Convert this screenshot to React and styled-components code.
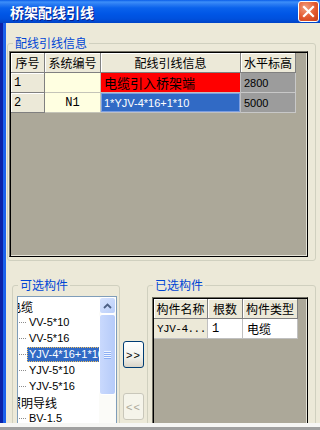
import React from 'react';
import styled, { createGlobalStyle, css } from 'styled-components';

const CJK = `"Noto Sans CJK SC", "Liberation Sans", sans-serif`;
const MONO = `"Liberation Mono", "Noto Sans CJK SC", monospace`;
const SANS = `"Liberation Sans", "Noto Sans CJK SC", sans-serif`;

const Global = createGlobalStyle`
  html, body { margin: 0; padding: 0; background: #ECE9D8; }
  body { font-family: ${CJK}; }
`;

const Window = styled.div`
  width: 320px;
  height: 430px;
  overflow: hidden;
  display: flex;
  flex-direction: column;
  background: #ECE9D8;
`;

const TitleBar = styled.div`
  height: 23px;
  flex: none;
  box-sizing: border-box;
  display: flex;
  align-items: center;
  justify-content: space-between;
  padding: 0 1px 0 10px;
  background: linear-gradient(to bottom, #0A5DE8 0px, #3D8FF9 2px, #2C7DF3 4px, #0A62EC 8px, #0056E6 14px, #0050DD 19px, #0043C6 23px);
`;

const Title = styled.span`
  color: #fff;
  font: bold 14px/16px ${CJK};
  text-shadow: 1px 1px 0 #0A1E8C;
`;

const CloseButton = styled.div`
  width: 21px;
  height: 21px;
  box-sizing: border-box;
  border: 1px solid #fff;
  border-radius: 3px;
  background: radial-gradient(circle at 35% 30%, #F3A080 0%, #E2582F 55%, #C63C18 100%);
  display: flex;
  align-items: center;
  justify-content: center;
`;

const Body = styled.div`
  height: 400px;
  flex: none;
  display: flex;
  overflow: hidden;
`;

const LeftFrame = styled.div`
  width: 6px;
  flex: none;
  background: linear-gradient(to right, #0A22A8 0px, #0A22A8 3px, #1C62EC 3px, #1C62EC 6px);
`;

const Content = styled.div`
  flex: 1;
  display: flex;
  flex-direction: column;
  padding-top: 13px;
  min-width: 0;
`;

const GroupBox = styled.fieldset`
  margin: 0 0 0 ${p => p.$ml || 0}px;
  width: ${p => p.$w}px;
  box-sizing: border-box;
  border: 1px solid #D0D0BF;
  border-radius: 3px;
  padding: ${p => p.$pad};
  min-width: 0;
  flex: none;
`;

const Legend = styled.legend`
  margin-left: ${p => p.$ml}px;
  padding: 0 2px;
  color: #0046D5;
  font: 12px/14px ${CJK};
`;

const GridFrame = styled.div`
  width: ${p => p.$w}px;
  height: ${p => p.$h}px;
  box-sizing: border-box;
  border: 1px solid;
  border-color: #716F64 #000 #000 #716F64;
  box-shadow: inset 1px 1px 0 #000, inset -1px -1px 0 #E4E2D6;
  background: #ACA899;
  padding: 1px 0 0 1px;
  overflow: hidden;
`;

const Row = styled.div`
  display: flex;
`;

const kinds = {
  head: css`
    background: #ECE9D8;
    border-right: 1px solid #808080;
    border-bottom: 1px solid #808080;
    box-shadow: inset 1px 1px 0 #fff;
    font: 12px ${CJK};
    justify-content: center;
  `,
  rowhead: css`
    background: #ECE9D8;
    border-right: 1px solid #808080;
    border-bottom: 1px solid #808080;
    box-shadow: inset 1px 1px 0 #fff;
    font: 12px ${MONO};
  `,
  yellow: css`
    background: #FFFFE1;
    border-right: 1px solid #C4C4B8;
    border-bottom: 1px solid #C4C4B8;
    font: 12px ${MONO};
    justify-content: center;
  `,
  red: css`
    background: #FF0000;
    border-right: 1px solid #C0C0C0;
    border-bottom: 1px solid #C0C0C0;
    font: 13px ${CJK};
  `,
  selected: css`
    background: #316AC5;
    color: #fff;
    border-right: 1px solid #C0C0C0;
    border-bottom: 1px solid #C0C0C0;
    box-shadow: inset 0 0 0 1px #7C9EE0;
    font: 11px ${SANS};
  `,
  gray: css`
    background: #9C9C9C;
    border-right: 1px solid #C8C8C8;
    border-bottom: 1px solid #C8C8C8;
    font: 11px ${SANS};
  `,
  white: css`
    background: #fff;
    border-right: 1px solid #C0C0C0;
    border-bottom: 1px solid #C0C0C0;
    font: 12px ${CJK};
  `,
  whiteMono: css`
    background: #fff;
    border-right: 1px solid #C0C0C0;
    border-bottom: 1px solid #C0C0C0;
    font: 12px ${MONO};
  `,
  nameCell: css`
    background: #ECE9D8;
    border-right: 1px solid #C0C0C0;
    border-bottom: 1px solid #C0C0C0;
    font: 11px ${MONO};
    letter-spacing: -0.5px;
  `,
};

const Cell = styled.div`
  width: ${p => p.$w}px;
  height: 20px;
  flex: none;
  box-sizing: border-box;
  display: flex;
  align-items: center;
  overflow: hidden;
  white-space: nowrap;
  padding: 0 ${p => (p.$pad ?? 3)}px;
  color: #000;
  ${p => kinds[p.$kind]}
`;

const BottomRow = styled.div`
  display: flex;
  margin-top: 17px;
  padding-left: 6px;
  align-items: flex-start;
`;

const ListBox = styled.div`
  width: 100px;
  height: 150px;
  box-sizing: border-box;
  border: 1px solid #7F9DB9;
  background: #fff;
  display: flex;
  overflow: hidden;
`;

const TreeArea = styled.div`
  flex: 1;
  overflow: hidden;
  min-width: 0;
`;

const TreeContent = styled.div`
  margin-left: -17px;
  padding-top: 1px;
`;

const TreeRow = styled.div`
  height: 16px;
  display: flex;
  align-items: center;
  white-space: nowrap;
  padding-left: ${p => (p.$child ? 18 : 6)}px;
`;

const Dots = styled.span`
  width: 7px;
  flex: none;
  border-top: 1px dotted #8C8C8C;
  margin-right: 1px;
`;

const TreeLabel = styled.span`
  height: 15px;
  display: flex;
  align-items: center;
  padding: 0 2px;
  font: ${p => (p.$cjk ? `12px ${CJK}` : `11px ${SANS}`)};
  color: ${p => (p.$sel ? '#fff' : '#000')};
  background: ${p => (p.$sel ? '#316AC5' : 'transparent')};
  outline: ${p => (p.$sel ? '1px dotted #F0C060' : 'none')};
  outline-offset: -1px;
`;

const ScrollBar = styled.div`
  width: 17px;
  flex: none;
  display: flex;
  flex-direction: column;
  background: #FBFBF8;
`;

const ScrollUp = styled.div`
  height: 17px;
  flex: none;
  box-sizing: border-box;
  border: 1px solid #fff;
  border-radius: 3px;
  background: linear-gradient(135deg, #D8E4FE, #B9CEF9);
  display: flex;
  align-items: center;
  justify-content: center;
`;

const Thumb = styled.div`
  height: 81px;
  flex: none;
  box-sizing: border-box;
  border: 1px solid #fff;
  border-radius: 3px;
  background: linear-gradient(to right, #C9D9FD, #B6CBF9);
  display: flex;
  align-items: center;
  justify-content: center;
`;

const ButtonCol = styled.div`
  width: 27px;
  flex: none;
  display: flex;
  flex-direction: column;
  align-items: flex-start;
  padding-top: 63px;
  padding-left: 3px;
  box-sizing: border-box;
`;

const XPButton = styled.div`
  width: 21px;
  height: 27px;
  box-sizing: border-box;
  margin-top: ${p => p.$mt || 0}px;
  border: 1px solid ${p => (p.$disabled ? '#C9C7BA' : '#003C74')};
  border-radius: 3px;
  background: ${p => (p.$disabled ? '#F5F4EA' : 'linear-gradient(to bottom, #FFFFFF, #F3F2EC 60%, #D9D4C8)')};
  color: ${p => (p.$disabled ? '#ACA899' : '#000')};
  font: 11px ${SANS};
  letter-spacing: 1px;
  display: flex;
  align-items: center;
  justify-content: center;
`;

const BottomStrip = styled.div`
  height: 7px;
  flex: none;
  background: linear-gradient(to bottom, #F6F6F4 0px, #F6F6F4 4px, #A0A0A0 4px, #A0A0A0 7px);
`;

const TOP_COLS = [34, 56, 140, 55];
const SEL_COLS = [54, 35, 55];

export default function App() {
  return (
    <>
      <Global />
      <Window>
        <TitleBar>
          <Title>桥架配线引线</Title>
          <CloseButton>
            <svg width="13" height="13" viewBox="0 0 13 13">
              <path d="M2 2 L11 11 M11 2 L2 11" stroke="#fff" strokeWidth="2.2" strokeLinecap="square" />
            </svg>
          </CloseButton>
        </TitleBar>
        <Body>
          <LeftFrame />
          <Content>
            <GroupBox $w={309} $ml={1} $pad="1px 7px 3px 1px">
              <Legend $ml={4}>配线引线信息</Legend>
              <GridFrame $w={299} $h={206}>
                <Row>
                  <Cell $w={TOP_COLS[0]} $kind="head">序号</Cell>
                  <Cell $w={TOP_COLS[1]} $kind="head">系统编号</Cell>
                  <Cell $w={TOP_COLS[2]} $kind="head">配线引线信息</Cell>
                  <Cell $w={TOP_COLS[3]} $kind="head">水平标高</Cell>
                </Row>
                <Row>
                  <Cell $w={TOP_COLS[0]} $kind="rowhead">1</Cell>
                  <Cell $w={TOP_COLS[1]} $kind="yellow"></Cell>
                  <Cell $w={TOP_COLS[2]} $kind="red">电缆引入桥架端</Cell>
                  <Cell $w={TOP_COLS[3]} $kind="gray">2800</Cell>
                </Row>
                <Row>
                  <Cell $w={TOP_COLS[0]} $kind="rowhead">2</Cell>
                  <Cell $w={TOP_COLS[1]} $kind="yellow">N1</Cell>
                  <Cell $w={TOP_COLS[2]} $kind="selected">1*YJV-4*16+1*10</Cell>
                  <Cell $w={TOP_COLS[3]} $kind="gray">5000</Cell>
                </Row>
              </GridFrame>
            </GroupBox>

            <BottomRow>
              <GroupBox $w={108} $pad="4px 2px 0 4px">
                <Legend $ml={1}>可选构件</Legend>
                <ListBox>
                  <TreeArea>
                    <TreeContent>
                      <TreeRow><TreeLabel $cjk>电缆</TreeLabel></TreeRow>
                      <TreeRow $child><Dots /><TreeLabel>VV-5*10</TreeLabel></TreeRow>
                      <TreeRow $child><Dots /><TreeLabel>VV-5*16</TreeLabel></TreeRow>
                      <TreeRow $child><Dots /><TreeLabel $sel>YJV-4*16+1*10</TreeLabel></TreeRow>
                      <TreeRow $child><Dots /><TreeLabel>YJV-5*10</TreeLabel></TreeRow>
                      <TreeRow $child><Dots /><TreeLabel>YJV-5*16</TreeLabel></TreeRow>
                      <TreeRow><TreeLabel $cjk>照明导线</TreeLabel></TreeRow>
                      <TreeRow $child><Dots /><TreeLabel>BV-1.5</TreeLabel></TreeRow>
                      <TreeRow $child><Dots /><TreeLabel>BV-2.5</TreeLabel></TreeRow>
                    </TreeContent>
                  </TreeArea>
                  <ScrollBar>
                    <ScrollUp>
                      <svg width="9" height="6" viewBox="0 0 9 6">
                        <path d="M1 5 L4.5 1.5 L8 5" stroke="#4D6185" strokeWidth="1.8" fill="none" />
                      </svg>
                    </ScrollUp>
                    <Thumb>
                      <svg width="7" height="8" viewBox="0 0 7 8">
                        <rect x="0" y="0" width="7" height="1" fill="#EEF4FE" />
                        <rect x="0" y="1" width="7" height="1" fill="#8CAEF4" />
                        <rect x="0" y="2" width="7" height="1" fill="#EEF4FE" />
                        <rect x="0" y="3" width="7" height="1" fill="#8CAEF4" />
                        <rect x="0" y="4" width="7" height="1" fill="#EEF4FE" />
                        <rect x="0" y="5" width="7" height="1" fill="#8CAEF4" />
                        <rect x="0" y="6" width="7" height="1" fill="#EEF4FE" />
                        <rect x="0" y="7" width="7" height="1" fill="#8CAEF4" />
                      </svg>
                    </Thumb>
                  </ScrollBar>
                </ListBox>
              </GroupBox>

              <ButtonCol>
                <XPButton>&gt;&gt;</XPButton>
                <XPButton $mt={25} $disabled>&lt;&lt;</XPButton>
              </ButtonCol>

              <GroupBox $w={169} $pad="5px 7px 0 4px">
                <Legend $ml={1}>已选构件</Legend>
                <GridFrame $w={156} $h={150}>
                  <Row>
                    <Cell $w={SEL_COLS[0]} $kind="head">构件名称</Cell>
                    <Cell $w={SEL_COLS[1]} $kind="head">根数</Cell>
                    <Cell $w={SEL_COLS[2]} $kind="head">构件类型</Cell>
                  </Row>
                  <Row>
                    <Cell $w={SEL_COLS[0]} $kind="nameCell">YJV-4...</Cell>
                    <Cell $w={SEL_COLS[1]} $kind="whiteMono" $pad={4}>1</Cell>
                    <Cell $w={SEL_COLS[2]} $kind="white" $pad={4}>电缆</Cell>
                  </Row>
                </GridFrame>
              </GroupBox>
            </BottomRow>
          </Content>
        </Body>
        <BottomStrip />
      </Window>
    </>
  );
}
